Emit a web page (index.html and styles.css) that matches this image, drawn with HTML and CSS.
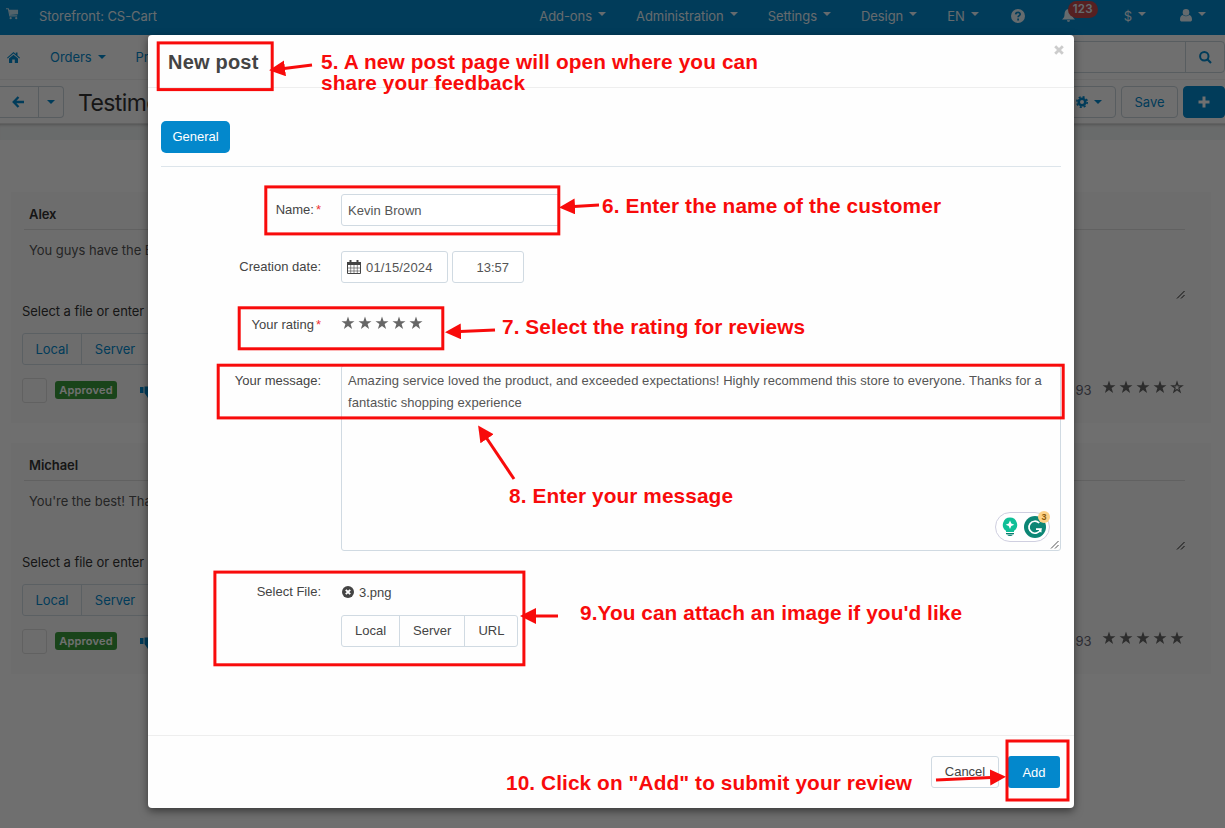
FILE: index.html
```html
<!DOCTYPE html>
<html lang="en">
<head>
    <meta charset="UTF-8">
    <meta name="viewport" content="width=device-width, initial-scale=1.0">
    <title>Testimonials - New post</title>
    <link rel="stylesheet" href="styles.css">
</head>
<body>

    <!-- Shared icons -->
    <svg class="sprite" width="0" height="0">
        <symbol id="star" viewBox="0 0 14 14"><path d="M7 .6l1.6 4.6h4.9L9.600 8.100l1.500 4.800L7 10l-4.100 2.900 1.500-4.800L.5 5.200h4.900z"/></symbol>
        <symbol id="star-empty" viewBox="0 0 14 14"><path fill="none" stroke="currentColor" stroke-width="1.300" d="M7 2.300l1.200 3.600h3.700L8.900 8.100l1.100 3.600L7 9.500l-3 2.200 1.100-3.600-3-2.200h3.700z"/></symbol>
        <symbol id="grip" viewBox="0 0 10 10"><path fill="none" stroke="currentColor" stroke-width="1" d="M1 8.500L8.500 1M5 8.500L8.500 5"/></symbol>
        <symbol id="thumb" viewBox="0 0 16 14"><path d="M0 1h3.500v6H0zM4.500 .5H12l3 1.500V8h-4v5.500H9L7 10.500 4.500 7z"/></symbol>
    </svg>

    <div class="page">
        <div class="topbar">
            <svg class="cart" width="13" height="13" viewBox="0 0 14 14"><path d="M0 .8h2.500l1.600 7.700h8" fill="none" stroke="currentColor" stroke-width="1.200"/><path d="M3 2h10v4.600l-9 1z"/><circle cx="5" cy="11" r="1.200"/><circle cx="11" cy="11" r="1.200"/></svg>
            <span class="storefront">Storefront: CS-Cart</span>
            <div class="topmenu">
                <span class="menu-item">Add-ons<i class="caret"></i></span>
                <span class="menu-item">Administration<i class="caret"></i></span>
                <span class="menu-item">Settings<i class="caret"></i></span>
                <span class="menu-item">Design<i class="caret"></i></span>
                <span class="menu-item lang">EN<i class="caret"></i></span>
                <span class="menu-item help"><svg width="14" height="14" viewBox="0 0 14 14"><circle cx="7" cy="7" r="7"/><path d="M4.700 5.400C4.800 2.600 9.300 2.700 9.200 5.300 9.100 6.700 7.200 6.600 7.100 8.300" class="cut"/><path d="M7.100 9.600v1.800" class="cut"/></svg></span>
                <span class="menu-item bell">
                    <svg width="13" height="14" viewBox="0 0 13 14"><path d="M6.500 0c2.800.3 4 2.500 4 5.500 0 2.500 1 3.500 2.500 5H0c1.500-1.500 2.500-2.500 2.500-5 0-3 1.200-5.200 4-5.500zM5 11.300h3c0 2-3 2-3 0z"/></svg>
                    <b class="badge">123</b>
                </span>
                <span class="menu-item currency">$<i class="caret"></i></span>
                <span class="menu-item"><svg width="12" height="13" viewBox="0 0 12 13"><circle cx="6" cy="3.400" r="3.300"/><path d="M2.800 6c2 1.600 4.400 1.600 6.400 0C11 6.500 12 8 12 10.500 12 12 11.300 12.600 10 12.600H2C.700 12.600 0 12 0 10.500 0 8 1 6.500 2.800 6z"/></svg><i class="caret"></i></span>
            </div>
        </div>

        <div class="subnav">
            <svg class="home" width="13" height="11" viewBox="0 0 13 11"><path d="M6.500 0L8.800 2V.500h1.700v3L13 5.700l-.7.800-5.800-4.900L.7 6.500 0 5.700z"/><path d="M6.500 2.700L11 6.500V11H7.800V7.500H5.200V11H2V6.500z"/></svg>
            <span class="nav-item">Orders<i class="caret"></i></span>
            <span class="nav-item">Pr</span>
            <div class="search">
                <div class="search-field"></div>
                <div class="search-btn"><svg width="13" height="13" viewBox="0 0 13 13"><circle cx="5.300" cy="5.300" r="4.200" fill="none" stroke="currentColor" stroke-width="2"/><path d="M8.300 8.300l3.700 3.700" stroke="currentColor" stroke-width="2.200"/></svg></div>
            </div>
        </div>

        <div class="actions">
            <div class="back-group">
                <div class="back"><svg width="12" height="12" viewBox="0 0 12 12"><path d="M6.500 1L1.700 6l4.800 5M2 6h10" fill="none" stroke="currentColor" stroke-width="2.300"/></svg></div>
                <div class="back-more"><i class="caret"></i></div>
            </div>
            <h1>Testimonials</h1>
            <div class="tools">
                <div class="btn gear"><svg width="12" height="12" viewBox="0 0 12 12"><circle cx="6" cy="6" r="3.300" fill="none" stroke="currentColor" stroke-width="2.600"/><circle cx="6" cy="6" r="5.200" fill="none" stroke="currentColor" stroke-width="1.600" stroke-dasharray="2.100 1.984"/></svg><i class="caret"></i></div>
                <div class="btn">Save</div>
                <div class="btn primary"><svg width="12" height="12" viewBox="0 0 12 12"><path d="M6 .5v11M.5 6h11" stroke="currentColor" stroke-width="3"/></svg></div>
            </div>
        </div>
        <div class="band"></div>

        <div class="posts">
            <div class="post">
                <div class="author">Alex</div>
                <div class="message">You guys have the B<svg class="grip" width="10" height="10"><use href="#grip"/></svg></div>
                <div class="file-label">Select a file or enter</div>
                <div class="btn-group"><span>Local</span><span>Server</span><span></span></div>
                <div class="post-foot">
                    <i class="check"></i>
                    <span class="approved">Approved</span>
                    <svg class="thumb" width="16" height="14"><use href="#thumb"/></svg>
                    <span class="ip">93</span>
                    <span class="stars">
                        <svg><use href="#star"/></svg><svg><use href="#star"/></svg><svg><use href="#star"/></svg><svg><use href="#star"/></svg><svg><use href="#star-empty"/></svg>
                    </span>
                </div>
            </div>
            <div class="post">
                <div class="author">Michael</div>
                <div class="message">You're the best! Tha<svg class="grip" width="10" height="10"><use href="#grip"/></svg></div>
                <div class="file-label">Select a file or enter</div>
                <div class="btn-group"><span>Local</span><span>Server</span><span></span></div>
                <div class="post-foot">
                    <i class="check"></i>
                    <span class="approved">Approved</span>
                    <svg class="thumb" width="16" height="14"><use href="#thumb"/></svg>
                    <span class="ip">93</span>
                    <span class="stars">
                        <svg><use href="#star"/></svg><svg><use href="#star"/></svg><svg><use href="#star"/></svg><svg><use href="#star"/></svg><svg><use href="#star"/></svg>
                    </span>
                </div>
            </div>
        </div>
    </div>

    <div class="backdrop"></div>

    <div class="modal">
        <div class="modal-header">
            <h2>New post</h2>
            <svg class="close" width="10" height="10" viewBox="0 0 10 10"><path d="M1.200 1.200l7.600 7.600M8.800 1.200L1.200 8.800" stroke="currentColor" stroke-width="2.800"/></svg>
        </div>
        <div class="modal-body">
            <div class="tabs"><span class="tab">General</span></div>

            <div class="row name-row">
                <label class="required">Name:</label>
                <div class="input name">Kevin Brown</div>
            </div>
            <div class="row date-row">
                <label>Creation date:</label>
                <div class="input date">
                    <svg width="14" height="14" viewBox="0 0 14 14"><path d="M.5 2.500h13v11H.5z" fill="none" stroke="currentColor"/><path d="M0 2h14v3H0zM2.500 0h2v3.500h-2zM9.500 0h2v3.500h-2z"/><path d="M3.700 5v9M7 5v9M10.300 5v9M0 8h14M0 11h14" stroke="currentColor" stroke-width=".6"/></svg>
                    01/15/2024
                </div>
                <div class="input time">13:57</div>
            </div>
            <div class="row rating-row">
                <label class="required">Your rating</label>
                <span class="stars">
                    <svg><use href="#star"/></svg><svg><use href="#star"/></svg><svg><use href="#star"/></svg><svg><use href="#star"/></svg><svg><use href="#star"/></svg>
                </span>
            </div>
            <div class="row message-row">
                <label>Your message:</label>
                <div class="textarea">
                    Amazing service loved the product, and exceeded expectations! Highly recommend this store to everyone. Thanks for a<br>fantastic shopping experience
                    <div class="assistant">
                        <svg width="16" height="20" viewBox="0 0 16 20"><path d="M8 .5a7.300 7.300 0 0 1 4 13.300V15H4v-1.200A7.300 7.300 0 0 1 8 .5z" fill="#0fbf97"/><path d="M8 3.500L9.300 6.500 12.300 7.800 9.300 9.100 8 12.100 6.700 9.100 3.700 7.800 6.700 6.500z" fill="#fff"/><path d="M4 16h8v1.200H4zM5 17.800h6q-1 1.200-3 1.200t-3-1.200z" fill="#087f70"/></svg>
                        <svg width="22" height="22" viewBox="0 0 22 22"><circle cx="11" cy="11" r="11" fill="#0c8675"/><path d="M15.200 7A6 6 0 1 0 16.600 13.200H12" fill="none" stroke="#fff" stroke-width="1.700"/><path d="M17.500 12v4.500l-3-1z" fill="#fff"/></svg>
                        <b>3</b>
                    </div>
                    <svg class="grip" width="10" height="10"><use href="#grip"/></svg>
                </div>
            </div>
            <div class="row file-row">
                <label>Select File:</label>
                <div class="file">
                    <div class="file-name">
                        <svg width="12" height="12" viewBox="0 0 12 12"><circle cx="6" cy="6" r="6"/><path d="M3.800 3.800l4.400 4.400M8.200 3.800L3.800 8.200" stroke="#fff" stroke-width="1.900"/></svg>
                        3.png
                    </div>
                    <div class="btn-group"><span>Local</span><span>Server</span><span>URL</span></div>
                </div>
            </div>
        </div>
        <div class="modal-footer">
            <div class="cancel">Cancel</div>
            <div class="add">Add</div>
        </div>
    </div>

    <!-- Step marks over the form -->
    <svg class="marks" width="1225" height="828" viewBox="0 0 1225 828">
        <defs>
            <marker id="head" markerUnits="userSpaceOnUse" markerWidth="18" markerHeight="18" refX="1" refY="8" orient="auto"><path d="M0 0L16 8 0 16z"/></marker>
        </defs>
        <g class="boxes">
            <rect x="158.200" y="42.900" width="114" height="46.700"/>
            <rect x="265.800" y="186.900" width="293" height="47"/>
            <rect x="239.200" y="307.800" width="203.600" height="41"/>
            <rect x="218.200" y="365.200" width="845" height="52.700"/>
            <rect x="214.900" y="572.100" width="309" height="92.700"/>
            <rect x="1007" y="741" width="61" height="59"/>
        </g>
        <g class="arrows">
            <path d="M312 65L284 68.500"/>
            <path d="M599 205L574 206.500"/>
            <path d="M495 330L460 331.500"/>
            <path d="M514 479L486.500 438"/>
            <path d="M558 616L535 616"/>
            <path d="M936 780L991 777.400"/>
        </g>
        <g class="steps">
            <text x="321" y="68.500" textLength="437">5. A new post page will open where you can</text>
            <text x="321" y="89.500" textLength="204">share your feedback</text>
            <text x="602" y="212.500" textLength="339">6. Enter the name of the customer</text>
            <text x="502" y="333.500" textLength="303">7. Select the rating for reviews</text>
            <text x="509" y="502.500" textLength="224">8. Enter your message</text>
            <text x="580" y="619.500" textLength="382">9.You can attach an image if you'd like</text>
            <text x="506" y="789.500" textLength="406">10. Click on "Add" to submit your review</text>
        </g>
    </svg>

</body>
</html>
```

FILE: styles.css
```css
* {
    box-sizing: border-box;
}

body {
    margin: 0;
    width: 1225px;
    height: 828px;
    overflow: hidden;
    position: relative;
    font-family: Inter, "Liberation Sans", sans-serif;
    font-size: 13px;
    line-height: 20px;
    color: #333;
}

svg {
    fill: currentColor;
    flex: none;
}

.sprite {
    position: absolute;
}

.page {
    height: 828px;
    overflow: hidden;
    background: #fdfdfd;
    letter-spacing: -0.06px;
}

.caret {
    width: 0;
    height: 0;
    border: 4px solid transparent;
    border-top-color: currentColor;
    border-bottom: 0;
    margin-left: 6px;
}

/* Top bar */
.topbar {
    display: flex;
    align-items: center;
    height: 35px;
    padding: 0 19px 4px 6px;
    background: #0388cc;
    color: #fff;
}

.cart {
    margin: 0 20px 3px 0;
    opacity: 0.75;
}

.topmenu {
    display: flex;
    align-items: center;
    margin-left: auto;
}

.storefront,
.topmenu {
    opacity: 0.9;
}

.menu-item {
    display: flex;
    align-items: center;
    margin-right: 30px;
    position: relative;
}

.menu-item .caret {
    margin-bottom: 3px;
}

.menu-item:last-child {
    margin-right: 0;
}

.menu-item.lang {
    margin-right: 32px;
}

.menu-item.help {
    margin-right: 37px;
}

.menu-item.bell {
    margin-right: 49px;
}

.menu-item.currency {
    margin-right: 34px;
}

.cut {
    fill: none;
    stroke: #0388cc;
    stroke-width: 1.7;
}

.badge {
    position: absolute;
    left: 6px;
    top: -8px;
    width: 30px;
    height: 17px;
    border-radius: 9px;
    background: #d9433f;
    font-size: 11.5px;
    line-height: 17px;
    font-weight: 600;
    text-align: center;
    letter-spacing: 0.2px;
}

/* Navigation */
.subnav {
    display: flex;
    align-items: center;
    height: 45px;
    padding-left: 7px;
    border-bottom: 1px solid #f0f0f0;
    color: #0388cc;
}

.home {
    margin-right: 30px;
}

.nav-item {
    display: flex;
    align-items: center;
    margin-right: 30px;
}

.search {
    display: flex;
    width: 300px;
    height: 32px;
    margin-left: auto;
    border: 1px solid #c8d3da;
    border-radius: 4px;
}

.search-field {
    flex: 1;
}

.search-btn {
    display: flex;
    align-items: center;
    justify-content: center;
    width: 39px;
    border-left: 1px solid #c8d3da;
}

.actions {
    display: flex;
    align-items: center;
    height: 44px;
    color: #0388cc;
    border-bottom: 1px solid #ddd;
}

.back-group {
    display: flex;
    width: 64px;
    height: 32px;
    border: 1px solid #c8d3da;
    border-left: 0;
    border-radius: 0 4px 4px 0;
}

.back {
    display: flex;
    align-items: center;
    width: 39px;
    padding-left: 12px;
    border-right: 1px solid #c8d3da;
}

.back-more {
    display: flex;
    align-items: center;
    padding-left: 2px;
}

h1 {
    margin: 2px 0 0 14px;
    font-size: 23px;
    font-weight: 400;
    letter-spacing: -0.6px;
    color: #333;
}

.tools {
    display: flex;
    gap: 5px;
    margin-left: auto;
}

.btn {
    display: flex;
    align-items: center;
    justify-content: center;
    height: 32px;
    width: 57px;
    border: 1px solid #c8d3da;
    border-radius: 4px;
}

.btn.gear {
    padding-left: 3px;
}

.btn.primary {
    width: 42px;
    background: #0388cc;
    border-color: #0388cc;
    color: #fff;
}

.band {
    height: 16px;
    background: #f0f3f3;
    box-shadow: inset 0 3px 3px -2px #bbb;
}

/* Testimonials */
.posts {
    padding: 52px 14px 0 11px;
}

.post {
    height: 231px;
    margin-bottom: 20px;
    padding: 12px 26px 0 11px;
    background: #f9f9f9;
}

.author {
    height: 26px;
    margin-left: 2px;
    padding-left: 5px;
    border-bottom: 1px solid #dcdcdc;
    font-weight: 600;
}

.message {
    position: relative;
    height: 71px;
    padding: 10px 0 0 7px;
    color: #555;
    letter-spacing: -0.05px;
}

.message .grip {
    position: absolute;
    right: -1px;
    bottom: 1px;
    color: #222;
}

.btn-group {
    display: flex;
    width: max-content;
    height: 32px;
    margin-top: 12px;
    border: 1px solid #d0dae2;
    border-radius: 3px;
    line-height: 31px;
    color: #0388cc;
}

.btn-group span {
    padding: 0 13px;
    border-right: 1px solid #d0dae2;
}

.btn-group span:last-child {
    border-right: 0;
}

.post .btn-group span:first-child {
    padding: 0 12.5px;
}

.post-foot {
    display: flex;
    align-items: center;
    height: 25px;
    margin-top: 13px;
}

.check {
    width: 25px;
    height: 25px;
    border: 1px solid #dcdcdc;
    border-radius: 3px;
}

.approved {
    width: 62px;
    height: 18px;
    margin: 0 0 1px 8px;
    border-radius: 3px;
    background: #3a9b3d;
    color: #fff;
    font-size: 11px;
    line-height: 18px;
    font-weight: 600;
    letter-spacing: 0.2px;
    text-align: center;
}

.thumb {
    margin: 4px 0 0 23px;
    color: #0388cc;
}

.ip {
    margin-left: auto;
    margin-right: 10px;
    padding-bottom: 2px;
    color: #667;
}

.stars {
    display: flex;
    gap: 3px;
    color: #666;
}

.stars svg {
    width: 14px;
    height: 14px;
}

.post-foot .stars {
    padding: 0 1.5px 8px 0;
}

/* Dialog */
.backdrop {
    position: absolute;
    inset: 0;
    background: rgba(0, 0, 0, 0.56);
}

.modal {
    position: absolute;
    left: 148px;
    top: 35px;
    width: 926px;
    height: 773px;
    display: flex;
    flex-direction: column;
    border-radius: 4px;
    background: #fefefe;
    box-shadow: 0 3px 9px rgba(0, 0, 0, 0.5);
    font-family: "Liberation Sans", Arial, sans-serif;
    color: #444;
}

.modal-header {
    display: flex;
    justify-content: space-between;
    height: 53px;
    padding: 10px 10px 0 20px;
    border-bottom: 1px solid #eee;
}

h2 {
    margin: 0;
    padding-top: 7px;
    font-size: 20px;
    line-height: 20px;
    letter-spacing: 0.2px;
    color: #444;
}

.close {
    color: #ccc;
}

.modal-body {
    flex: 1;
    padding: 33px 13px 0;
}

.tabs {
    height: 46px;
    border-bottom: 1px solid #dde5eb;
}

.tab {
    display: inline-block;
    width: 69px;
    height: 32px;
    border-radius: 5px;
    background: #0388cc;
    color: #fff;
    line-height: 32px;
    text-align: center;
}

.row {
    display: flex;
    line-height: 31px;
}

.row label {
    width: 160px;
    margin-right: 20px;
    text-align: right;
}

.required::after {
    content: "*";
    margin-left: 2px;
    color: #e33;
}

.input {
    height: 32px;
    border: 1px solid #d0dae2;
    border-radius: 3px;
    background: #fff;
    padding-left: 6px;
    line-height: 31px;
    color: #555;
}

.name-row {
    margin-top: 27px;
}

.input.name {
    width: 219px;
    letter-spacing: 0.06px;
}

.date-row {
    margin-top: 25px;
}

.input.date {
    display: flex;
    align-items: center;
    gap: 5px;
    width: 107px;
    padding-left: 5px;
    margin-right: 4px;
    letter-spacing: 0.15px;
}

.input.date svg {
    color: #444;
}

.input.time {
    width: 72px;
    padding: 0 14px 0 0;
    text-align: right;
}

.rating-row {
    height: 30px;
    margin-top: 26px;
    align-items: center;
}

.rating-row .stars {
    padding: 0 0 2px;
}

.message-row {
    margin-top: 26px;
}

.textarea {
    position: relative;
    width: 720px;
    height: 186px;
    border: 1px solid #d0dae2;
    border-radius: 3px;
    padding: 4px 6px;
    line-height: 22px;
    letter-spacing: 0.06px;
    color: #555;
    white-space: nowrap;
}

.textarea .grip {
    position: absolute;
    right: 0;
    bottom: 0;
}

.assistant {
    position: absolute;
    right: 10px;
    bottom: 8px;
    display: flex;
    align-items: center;
    gap: 6px;
    width: 55px;
    height: 30px;
    padding-left: 6px;
    border: 1px solid #cfcfe0;
    border-radius: 15px;
    background: #fff;
}

.assistant b {
    position: absolute;
    right: -1px;
    top: -2px;
    width: 12px;
    height: 12px;
    border-radius: 6px;
    background: #fcd288;
    color: #8a5a0a;
    font-size: 9px;
    line-height: 12px;
    text-align: center;
}

.file-row {
    margin-top: 26px;
}

.file-row label {
    line-height: 30px;
}

.file-name {
    display: flex;
    align-items: center;
    gap: 5px;
    height: 26px;
    padding: 4px 0 0 1px;
}

.modal .btn-group {
    line-height: 30px;
    color: #444;
}

.modal-footer {
    display: flex;
    justify-content: flex-end;
    gap: 9px;
    height: 73px;
    padding: 20px 14px 0;
    border-top: 1px solid #eee;
    text-align: center;
    line-height: 30px;
}

.cancel {
    width: 68px;
    height: 32px;
    border: 1px solid #d0dae2;
    border-radius: 3px;
}

.add {
    width: 52px;
    height: 32px;
    border-radius: 3px;
    background: #0388cc;
    color: #fff;
    line-height: 33px;
}

/* Step marks */
.marks {
    position: absolute;
    left: 0;
    top: 0;
    fill: #f80b0b;
}

.boxes {
    fill: none;
    stroke: #f80b0b;
    stroke-width: 3;
}

.arrows {
    stroke: #f80b0b;
    stroke-width: 3;
}

.arrows path {
    marker-end: url(#head);
}

.steps {
    font: bold 20.8px "Liberation Sans", Arial, sans-serif;
}

#head path {
    fill: #f80b0b;
    stroke: none;
}
```
